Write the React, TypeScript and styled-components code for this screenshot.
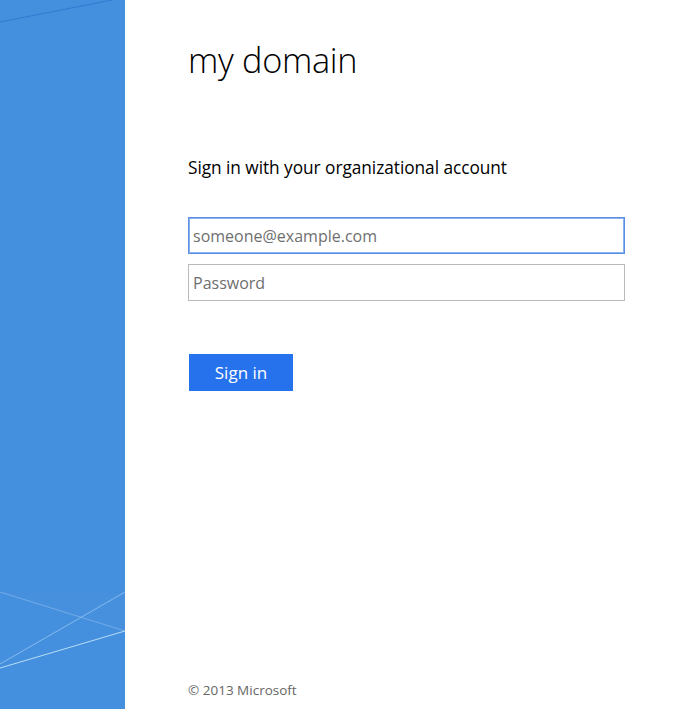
import styled, { createGlobalStyle } from 'styled-components';

const GlobalStyle = createGlobalStyle`
  html, body {
    margin: 0;
    padding: 0;
    height: 100%;
    overflow: hidden;
    background: #ffffff;
  }
  #root {
    height: 100%;
  }
  * {
    box-sizing: border-box;
  }
`;

const Page = styled.div`
  display: flex;
  height: 100vh;
  font-family: 'Segoe UI', 'Open Sans', 'Noto Sans', sans-serif;
  color: #000;
`;

const Illustration = styled.div`
  position: relative;
  width: 125px;
  flex: 0 0 125px;
  background: #448fde;
  overflow: hidden;

  svg {
    position: absolute;
    inset: 0;
    width: 100%;
    height: 100%;
  }
`;

const Content = styled.div`
  flex: 1;
  display: flex;
  flex-direction: column;
  padding: 36px 0 10px 63px;
`;

const Title = styled.h1`
  margin: 0;
  font-size: 34.3px;
  font-weight: 300;
  line-height: 48px;
  letter-spacing: -0.3px;
`;

const Subtitle = styled.div`
  margin-top: 73px;
  font-size: 17.3px;
  line-height: 22px;
  letter-spacing: -0.05px;
`;

const Form = styled.form`
  display: flex;
  flex-direction: column;
  gap: 10px;
  margin-top: 38px;
  width: 437px;
`;

const Field = styled.input<{ $focused?: boolean }>`
  height: 37px;
  width: 100%;
  padding: 0 4px;
  font-family: inherit;
  font-size: 16px;
  color: #333;
  outline: none;
  border: 1px solid ${(p) => (p.$focused ? '#5a8fe3' : '#bababa')};
  box-shadow: ${(p) => (p.$focused ? 'inset 0 0 0 1px #8ab2ee' : 'none')};
  border-radius: 0;
  background: #fff;

  &::placeholder {
    color: #6f6f6f;
  }
`;

const SubmitButton = styled.button`
  align-self: flex-start;
  margin: 43px 0 0 1px;
  width: 104px;
  height: 37px;
  border: none;
  background: #2672ec;
  color: #fff;
  font-family: inherit;
  font-size: 17px;
  cursor: pointer;
`;

const Footer = styled.div`
  margin-top: auto;
  font-size: 13.5px;
  color: #666;
`;

export default function App() {
  return (
    <>
      <GlobalStyle />
      <Page>
        <Illustration>
          <svg viewBox="0 0 125 709" preserveAspectRatio="none">
            <polygon points="0,592 125,631 125,593" fill="#4a93e0" opacity="0.35" />
            <line x1="0" y1="22" x2="112" y2="0" stroke="#2f7bd0" strokeWidth="1" />
            <line x1="0" y1="592" x2="125" y2="631" stroke="#7fb4ea" strokeWidth="0.8" />
            <line x1="0" y1="664" x2="125" y2="592" stroke="#8cc0ee" strokeWidth="0.9" />
            <line x1="0" y1="668" x2="125" y2="631" stroke="#b5dcf6" strokeWidth="1.1" />
          </svg>
        </Illustration>
        <Content>
          <Title>my domain</Title>
          <Subtitle>Sign in with your organizational account</Subtitle>
          <Form onSubmit={(e) => e.preventDefault()}>
            <Field $focused type="email" placeholder="someone@example.com" />
            <Field type="password" placeholder="Password" />
            <SubmitButton type="submit">Sign in</SubmitButton>
          </Form>
          <Footer>© 2013 Microsoft</Footer>
        </Content>
      </Page>
    </>
  );
}
